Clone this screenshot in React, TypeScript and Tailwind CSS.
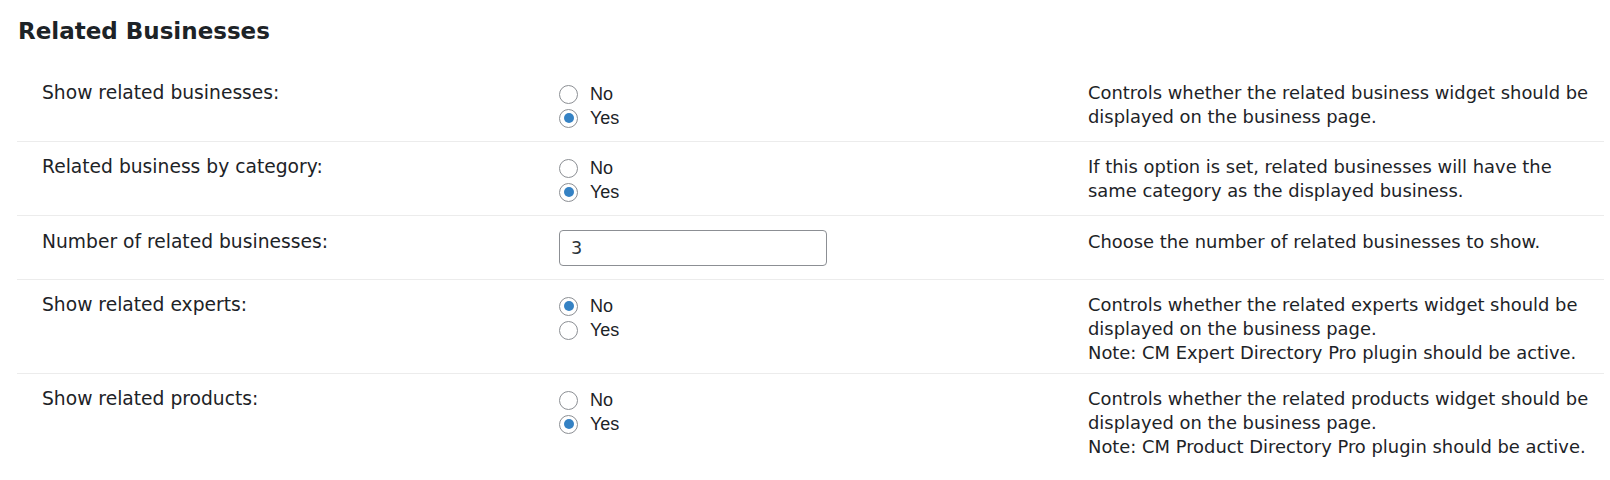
import { type ReactNode } from 'react';

type Setting = {
  label: string;
  control: ReactNode;
  description: string[];
  compact?: boolean;
};

function Radio({ checked, label }: { checked?: boolean; label: string }) {
  return (
    <label className="flex h-[24px] items-center gap-[12px]">
      <span className="flex h-[19px] w-[19px] shrink-0 items-center justify-center rounded-full border border-[#8c8f94] bg-white">
        {checked ? <span className="h-[10px] w-[10px] rounded-full bg-[#3582c4]" /> : null}
      </span>
      <span className="font-['Liberation_Sans',Arial,sans-serif] text-[18px] text-[#1d2327]">
        {label}
      </span>
    </label>
  );
}

function YesNo({ value }: { value: 'yes' | 'no' }) {
  return (
    <div className="flex flex-col pt-[14px] pb-[11px]">
      <Radio label="No" checked={value === 'no'} />
      <Radio label="Yes" checked={value === 'yes'} />
    </div>
  );
}

const settings: Setting[] = [
  {
    label: 'Show related businesses:',
    control: <YesNo value="yes" />,
    description: [
      'Controls whether the related business widget should be',
      'displayed on the business page.',
    ],
  },
  {
    label: 'Related business by category:',
    control: <YesNo value="yes" />,
    description: [
      'If this option is set, related businesses will have the',
      'same category as the displayed business.',
    ],
  },
  {
    label: 'Number of related businesses:',
    control: (
      <div className="pt-[14px] pb-[13px]">
        <input
          type="text"
          defaultValue="3"
          className="h-[36px] w-[268px] rounded-[4px] border border-[#8c8f94] bg-white px-[11px] font-['DejaVu_Sans',Verdana,sans-serif] text-[17.6px] text-[#2c3338] outline-none"
        />
      </div>
    ),
    description: ['Choose the number of related businesses to show.'],
    compact: true,
  },
  {
    label: 'Show related experts:',
    control: <YesNo value="no" />,
    description: [
      'Controls whether the related experts widget should be',
      'displayed on the business page.',
      'Note: CM Expert Directory Pro plugin should be active.',
    ],
  },
  {
    label: 'Show related products:',
    control: <YesNo value="yes" />,
    description: [
      'Controls whether the related products widget should be',
      'displayed on the business page.',
      'Note: CM Product Directory Pro plugin should be active.',
    ],
  },
];

export default function App() {
  return (
    <div className="min-h-[480px] bg-white font-['DejaVu_Sans',Verdana,sans-serif] text-[#1d2327]">
      <h2 className="pl-[18px] pt-[16px] text-[23px] font-bold leading-[30px] text-[#1d2327]">
        Related Businesses
      </h2>

      <div className="ml-[17px] mt-[22px] w-[1587px]">
        {settings.map((s, i) => (
          <div
            key={s.label}
            className={
              'grid grid-cols-[528px_530px_1fr] ' + (i > 0 ? 'border-t border-[#ececec]' : '')
            }
          >
            <div
              className={
                'pl-[25px] text-[18.7px] leading-[24px] ' +
                (s.compact ? 'pt-[14px]' : 'pt-[13px]')
              }
            >
              {s.label}
            </div>
            <div className="pl-[14px]">{s.control}</div>
            <div
              className={
                'pl-[13px] pb-[8px] text-[17.9px] leading-[24px] ' +
                (s.compact ? 'pt-[14px]' : 'pt-[13px]')
              }
            >
              {s.description.map((line) => (
                <div key={line} className="whitespace-nowrap">
                  {line}
                </div>
              ))}
            </div>
          </div>
        ))}
      </div>
    </div>
  );
}
